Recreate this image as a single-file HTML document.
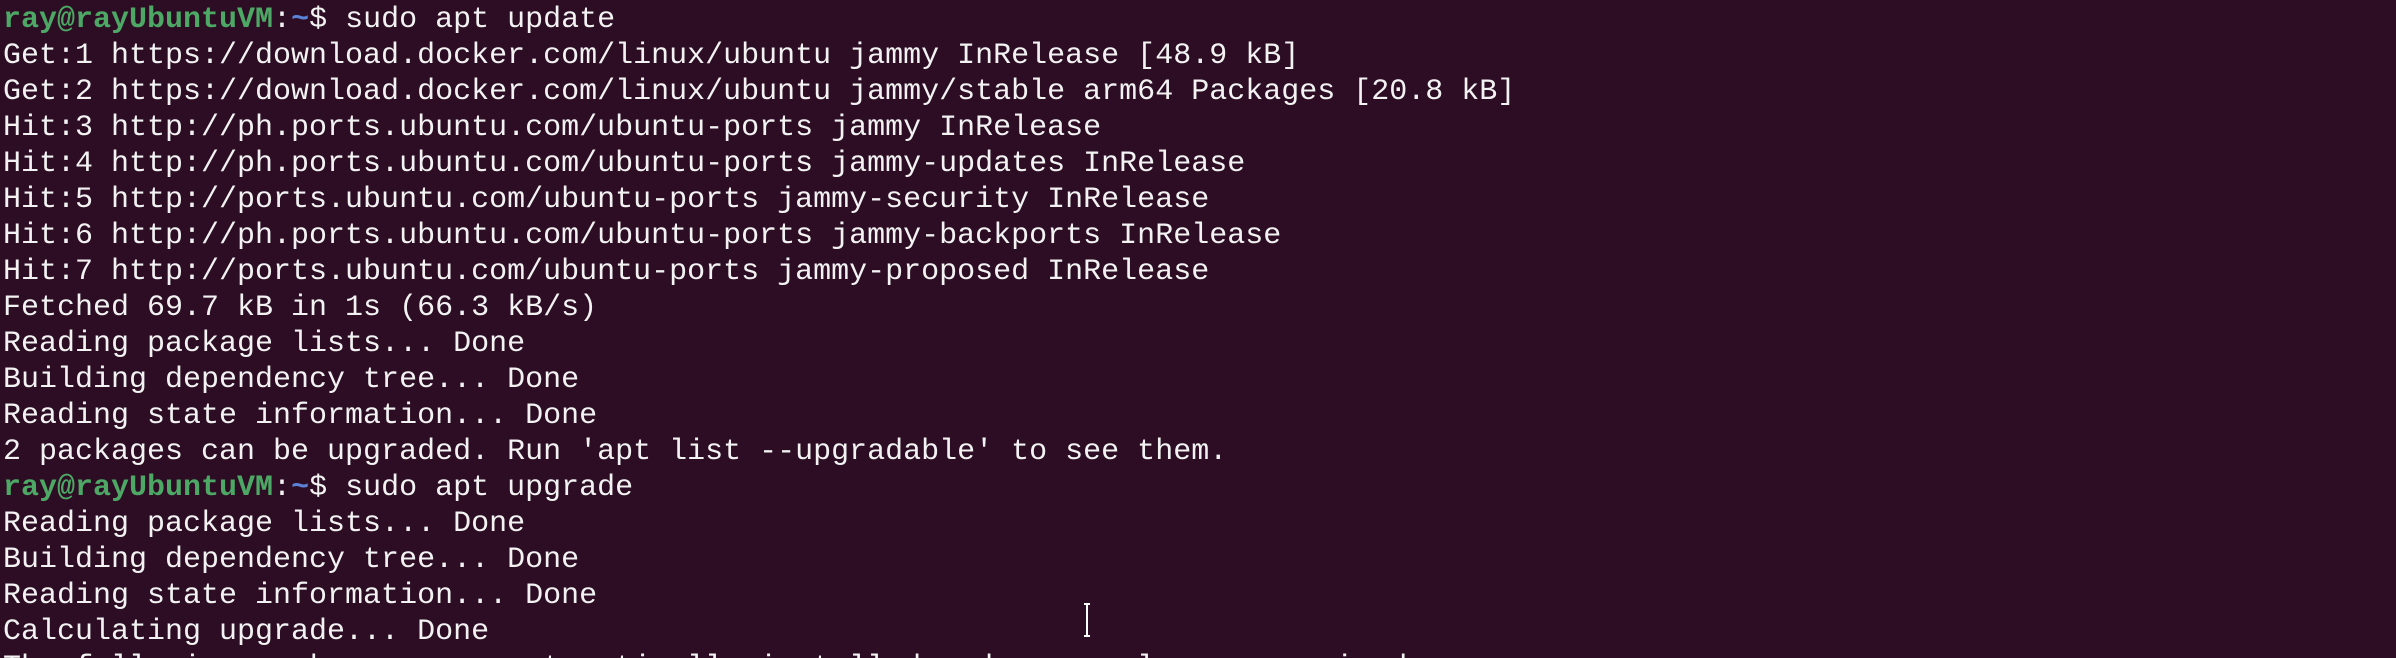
<!DOCTYPE html>
<html><head><meta charset="utf-8"><style>
html{margin:0;padding:0;width:2396px;height:658px;overflow:hidden;background:#2c0d24;}
body{margin:0;padding:0;width:2396px;height:658px;overflow:hidden;background:#2c0d24;position:relative;}
pre{margin:0;padding:2px 0 0 3px;font-family:"Liberation Mono",monospace;font-size:30px;line-height:36px;color:#f2f2f2;height:656px;overflow:hidden;}
.g{color:#4ca864;font-weight:bold;}
.b{color:#5b82d6;font-weight:bold;}
.cur{position:absolute;left:1084px;top:603px;width:6px;height:34px;}
</style></head><body>
<pre><span class="g">ray@rayUbuntuVM</span>:<span class="b">~</span>$ sudo apt update
Get:1 https://download.docker.com/linux/ubuntu jammy InRelease [48.9 kB]
Get:2 https://download.docker.com/linux/ubuntu jammy/stable arm64 Packages [20.8 kB]
Hit:3 http://ph.ports.ubuntu.com/ubuntu-ports jammy InRelease
Hit:4 http://ph.ports.ubuntu.com/ubuntu-ports jammy-updates InRelease
Hit:5 http://ports.ubuntu.com/ubuntu-ports jammy-security InRelease
Hit:6 http://ph.ports.ubuntu.com/ubuntu-ports jammy-backports InRelease
Hit:7 http://ports.ubuntu.com/ubuntu-ports jammy-proposed InRelease
Fetched 69.7 kB in 1s (66.3 kB/s)
Reading package lists... Done
Building dependency tree... Done
Reading state information... Done
2 packages can be upgraded. Run 'apt list --upgradable' to see them.
<span class="g">ray@rayUbuntuVM</span>:<span class="b">~</span>$ sudo apt upgrade
Reading package lists... Done
Building dependency tree... Done
Reading state information... Done
Calculating upgrade... Done
The following packages were automatically installed and are no longer required:</pre>
<svg class="cur" viewBox="0 0 6 34"><rect x="0" y="0" width="6" height="2" fill="#fff"/><rect x="2" y="0" width="2" height="34" fill="#fff"/><rect x="0" y="32" width="6" height="2" fill="#fff"/></svg>
</body></html>
